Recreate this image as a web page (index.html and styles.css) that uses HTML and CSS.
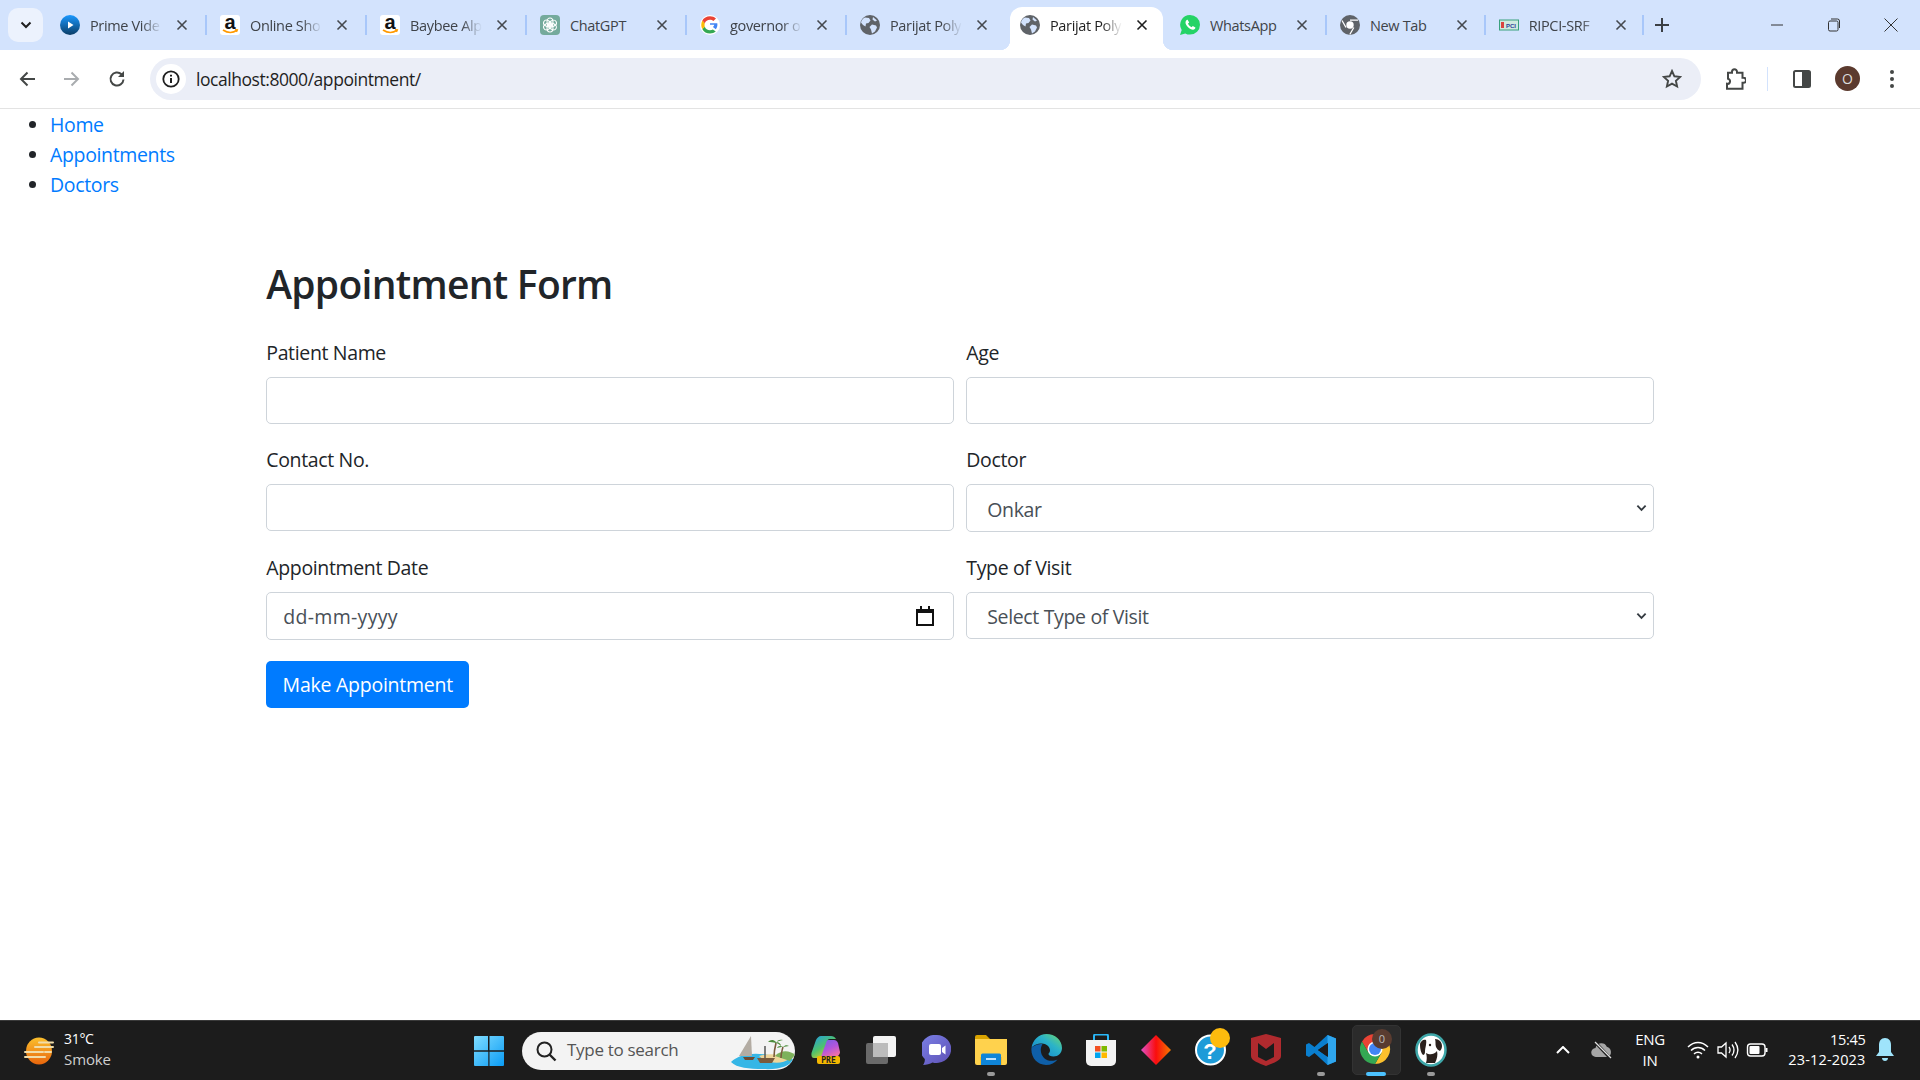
FILE: index.html
```html
<!DOCTYPE html>
<html lang="en">
<head>
<meta charset="utf-8">
<title>Appointment Form</title>
<link rel="stylesheet" href="styles.css">
</head>
<body>
<svg class="defs" width="0" height="0" aria-hidden="true">
  <defs>
    <symbol id="x" viewBox="0 0 12 12"><path d="M1.500 1.500l9 9M10.500 1.500l-9 9" fill="none" stroke="currentColor" stroke-width="1.600"/></symbol>
    <symbol id="globe" viewBox="0 0 20 20"><circle cx="10" cy="10" r="10" fill="#5f6368"/><path d="M5 2.500l4 .5 1.500 2.500-2 2.500-2.500 .5-.5 3-2.500-1.500-2-2.500C1.500 5 3 3.500 5 2.500zM12 9.500l4 1 1 2-2 4-3 2-1-4-1.500-2.500zM13 2l4 3.500-2 1-2.500-2z" fill="#d3e3fd"/></symbol>
    <symbol id="amazon" viewBox="0 0 20 20"><rect width="20" height="20" rx="3" fill="#fff"/><path d="M3 15c4.500 3 10 3 14 .3" fill="none" stroke="#f90" stroke-width="1.700"/><path d="M15 14.500l2.500 .2-1 2.300" fill="none" stroke="#f90" stroke-width="1.200"/><text x="10" y="13.500" text-anchor="middle" class="amz">a</text></symbol>
    <symbol id="chevron" viewBox="0 0 12 8"><path d="M1.500 1.500L6 6l4.500-4.500" fill="none" stroke="#343a40" stroke-width="2"/></symbol>
  </defs>
</svg>
<div class="window">
  <header class="tabstrip">
    <button class="tabsearch" aria-label="Search tabs"><svg width="12" height="8" viewBox="0 0 12 8"><path d="M1.500 1.500L6 6l4.500-4.500" fill="none" stroke="#1f1f1f" stroke-width="2"/></svg></button>
    <div class="tabs">
      <div class="tab"><svg class="fav" viewBox="0 0 20 20"><defs><linearGradient id="pv" x1="0" y1="0" x2="0" y2="1"><stop offset="0" stop-color="#1a98ff"/><stop offset="1" stop-color="#0b3d66"/></linearGradient></defs><circle cx="10" cy="10" r="10" fill="url(#pv)"/><path d="M8 6.500l5.500 3.500L8 13.500z" fill="#fff"/></svg><span class="tab-title">Prime Vide</span><svg class="close"><use href="#x"/></svg></div>
      <div class="tab"><svg class="fav"><use href="#amazon"/></svg><span class="tab-title">Online Sho</span><svg class="close"><use href="#x"/></svg></div>
      <div class="tab"><svg class="fav"><use href="#amazon"/></svg><span class="tab-title">Baybee Alp</span><svg class="close"><use href="#x"/></svg></div>
      <div class="tab"><svg class="fav" viewBox="0 0 20 20"><rect width="20" height="20" rx="4" fill="#74aa9c"/><g fill="none" stroke="#fff" stroke-width="1.100"><ellipse cx="10" cy="7" rx="3" ry="4"/><ellipse cx="10" cy="13" rx="3" ry="4"/><ellipse cx="10" cy="7" rx="3" ry="4" transform="rotate(60 10 10)"/><ellipse cx="10" cy="13" rx="3" ry="4" transform="rotate(60 10 10)"/><ellipse cx="10" cy="7" rx="3" ry="4" transform="rotate(120 10 10)"/><ellipse cx="10" cy="13" rx="3" ry="4" transform="rotate(120 10 10)"/></g></svg><span class="tab-title plain">ChatGPT</span><svg class="close"><use href="#x"/></svg></div>
      <div class="tab"><svg class="fav" viewBox="0 0 20 20"><circle cx="10" cy="10" r="10" fill="#fff"/><path d="M10 8.200h7.300c.4 2.200-.2 4.500-1.500 6L12.900 12c.8-.6 1.200-1.300 1.400-2.200H10z" fill="#4285f4"/><path d="M4.800 11.800c.7 2 2.700 3.400 5.200 3.400 1.100 0 2.100-.3 2.900-.8l2.900 2.200c-1.500 1.300-3.500 2-5.800 2-3.400 0-6.300-1.900-7.700-4.700z" fill="#34a853"/><path d="M4.800 11.800c-.4-1.100-.4-2.400 0-3.600L2.300 5.500C.9 8.300.9 11.600 2.300 14z" fill="#fbbc05"/><path d="M10 4.800c1.300 0 2.500.5 3.400 1.300l2.600-2.500C14.400 2 12.300 1.200 10 1.200c-3.400 0-6.300 1.800-7.700 4.300l2.500 2.700C5.500 6.200 7.500 4.800 10 4.800z" fill="#ea4335"/></svg><span class="tab-title">governor o</span><svg class="close"><use href="#x"/></svg></div>
      <div class="tab before-active"><svg class="fav"><use href="#globe"/></svg><span class="tab-title">Parijat Poly</span><svg class="close"><use href="#x"/></svg></div>
      <div class="tab active"><svg class="fav"><use href="#globe"/></svg><span class="tab-title">Parijat Poly</span><svg class="close"><use href="#x"/></svg></div>
      <div class="tab"><svg class="fav" viewBox="0 0 20 20"><path d="M10 0a10 9.800 0 0 1 0 19.600c-1.700 0-3.300-.4-4.700-1.200L0 20l1.700-5A9.800 9.800 0 0 1 10 0z" fill="#25d366"/><path d="M7 4.800c-1.700 1-2 3-.7 5.300 1.500 2.700 4.400 4.900 6.800 4.700 1.300-.2 2.200-1 2.300-2.300l-2.600-1.500-1.200 1.200c-1.500-.5-3-2-3.600-3.600l1.200-1.200L7.600 4.700z" fill="#fff"/></svg><span class="tab-title plain">WhatsApp</span><svg class="close"><use href="#x"/></svg></div>
      <div class="tab narrow"><svg class="fav" viewBox="0 0 20 20"><circle cx="10" cy="10" r="10" fill="#5f6368"/><circle cx="10" cy="10" r="3.700" fill="#fff"/><path d="M10 5.200h8M6 12.500l-4-7M13.800 12.500l-4 7" stroke="#fff" stroke-width="1.300" fill="none"/></svg><span class="tab-title plain">New Tab</span><svg class="close"><use href="#x"/></svg></div>
      <div class="tab narrow"><svg class="fav" viewBox="0 0 20 20"><rect x=".5" y="5" width="19" height="10" fill="#cfe9df" stroke="#3aa17e"/><rect x="2" y="7" width="3" height="6" fill="#d9433f"/><text x="12" y="12.500" text-anchor="middle" class="ripci">PCI</text></svg><span class="tab-title">RIPCI-SRF</span><svg class="close"><use href="#x"/></svg></div>
    </div>
    <button class="newtab" aria-label="New tab"><svg width="14" height="14" viewBox="0 0 14 14"><path d="M7 0v14M0 7h14" stroke="#3b3f45" stroke-width="2"/></svg></button>
    <div class="winctl">
      <svg class="wc" width="14" height="14" viewBox="0 0 14 14"><path d="M1 7h12" stroke="#333" stroke-width="1"/></svg>
      <svg class="wc" width="14" height="14" viewBox="0 0 14 14"><rect x="1.500" y="3" width="9.500" height="10" rx="1.500" fill="none" stroke="#333"/><path d="M4 1h6.500A2 2 0 0 1 12.500 3v7" fill="none" stroke="#333"/></svg>
      <svg class="wc" width="14" height="14" viewBox="0 0 14 14"><path d="M.5.500l13 13M13.500.500l-13 13" stroke="#333" stroke-width="1"/></svg>
    </div>
  </header>

  <nav class="toolbar">
    <svg class="tb back" width="18" height="18" viewBox="0 0 18 18"><path d="M17 9H3M9.500 2.500L3 9l6.500 6.500" fill="none" stroke="#444746" stroke-width="2"/></svg>
    <svg class="tb fwd" width="18" height="18" viewBox="0 0 18 18"><path d="M1 9h14M8.500 2.500L15 9l-6.500 6.500" fill="none" stroke="#a9acaf" stroke-width="2"/></svg>
    <svg class="tb reload" width="18" height="18" viewBox="0 0 18 18"><path d="M15.500 9.500a6.500 6.500 0 1 1-2-5.200" fill="none" stroke="#444746" stroke-width="2"/><path d="M16 1v6h-6z" fill="#444746"/></svg>
    <div class="omnibox">
      <span class="site-info"><svg width="18" height="18" viewBox="0 0 18 18"><circle cx="9" cy="9" r="7.700" fill="none" stroke="#1f1f1f" stroke-width="1.800"/><path d="M9 8v5M9 4.800v1.800" stroke="#1f1f1f" stroke-width="2"/></svg></span>
      <span class="url">localhost:8000/appointment/</span>
      <svg class="star" width="20" height="20" viewBox="0 0 20 20"><path d="M10 2l2.400 5.300 5.800.6-4.300 3.900 1.200 5.700-5.100-2.900-5.100 2.900 1.200-5.700L1.800 7.900l5.800-.6z" fill="none" stroke="#444746" stroke-width="1.900"/></svg>
    </div>
    <svg class="tb ext" width="22" height="22" viewBox="0 0 22 22"><path d="M8 4.500V3.500a2.500 2.500 0 0 1 5 0v1h5.500v5h1a2.500 2.500 0 0 1 0 5h-1v6H3v-5a2.500 2.500 0 0 0 1-5h0v-6z" transform="translate(0 .3)" fill="none" stroke="#444746" stroke-width="2"/></svg>
    <span class="tb-sep"></span>
    <svg class="tb panel" width="20" height="20" viewBox="0 0 20 20"><rect x="2" y="2" width="16" height="16" rx="1.500" fill="none" stroke="#444746" stroke-width="2"/><rect x="10" y="2" width="8" height="16" fill="#444746"/></svg>
    <span class="avatar">O</span>
    <svg class="tb menu" width="6" height="20" viewBox="0 0 6 20"><circle cx="3" cy="3" r="2" fill="#444746"/><circle cx="3" cy="10" r="2" fill="#444746"/><circle cx="3" cy="17" r="2" fill="#444746"/></svg>
  </nav>

  <main class="page">
    <ul class="site-nav">
      <li><a href="#">Home</a></li>
      <li><a href="#">Appointments</a></li>
      <li><a href="#">Doctors</a></li>
    </ul>
    <section class="container">
      <h2>Appointment Form</h2>
      <form class="form-grid">
        <div class="field"><label for="pn">Patient Name</label><input id="pn" class="control" type="text"></div>
        <div class="field"><label for="age">Age</label><input id="age" class="control" type="text"></div>
        <div class="field"><label for="cn">Contact No.</label><input id="cn" class="control" type="text"></div>
        <div class="field"><label for="doc">Doctor</label>
          <div class="ctl-wrap"><select id="doc" class="control select"><option>Onkar</option></select><svg class="caret"><use href="#chevron"/></svg></div></div>
        <div class="field"><label for="dt">Appointment Date</label>
          <div class="ctl-wrap"><input id="dt" class="control date" type="text" placeholder="dd-mm-yyyy">
            <svg class="cal" width="18" height="20" viewBox="0 0 18 20"><path d="M1 4h16v15H1z" fill="none" stroke="#111" stroke-width="2"/><path d="M0 3h18v4H0zM4 0h2v4H4zM12 0h2v4h-2z" fill="#111"/></svg></div></div>
        <div class="field"><label for="tv">Type of Visit</label>
          <div class="ctl-wrap"><select id="tv" class="control select short"><option>Select Type of Visit</option></select><svg class="caret"><use href="#chevron"/></svg></div></div>
        <div class="actions"><button type="button" class="btn">Make Appointment</button></div>
      </form>
    </section>
  </main>

  <footer class="taskbar">
    <div class="weather">
      <svg width="34" height="28" viewBox="0 0 34 28"><defs><linearGradient id="sun" x1="0" y1="0" x2="0" y2="1"><stop offset="0" stop-color="#fbc02d"/><stop offset="1" stop-color="#e8650c"/></linearGradient></defs><ellipse cx="16" cy="14" rx="13" ry="13.500" fill="url(#sun)"/><path d="M16 5.500h14M12 10h18M2 15h18M22 15h6M2 20h20" stroke="#f1dca8" stroke-width="2" stroke-linecap="round"/></svg>
      <div class="wtext"><span class="temp">31°C</span><span class="cond">Smoke</span></div>
    </div>
    <svg class="startbtn" width="30" height="30" viewBox="0 0 30 30"><defs><linearGradient id="win" x1="0" y1="0" x2="1" y2="1"><stop offset="0" stop-color="#7fdcff"/><stop offset="1" stop-color="#0a9cf5"/></linearGradient></defs><path d="M0 1a1 1 0 0 1 1-1h13v14.300H0zM15.500 0H29a1 1 0 0 1 1 1v13.300H15.500zM0 15.700h14.300V30H1a1 1 0 0 1-1-1zM15.500 15.700H30V29a1 1 0 0 1-1 1H15.500z" fill="url(#win)"/></svg>
    <div class="search">
      <svg width="22" height="22" viewBox="0 0 22 22"><circle cx="9.500" cy="9.500" r="7" fill="none" stroke="#222" stroke-width="2"/><path d="M14.500 14.500l6 6" stroke="#222" stroke-width="2.400"/></svg>
      <span class="search-text">Type to search</span>
      <svg class="island" width="66" height="38" viewBox="0 0 66 38"><path d="M2 30c8-8 22-10 38-7 10 1 18 2 24 4-2 7-14 11-30 10C20 37 8 36 2 30z" fill="#35b6e6"/><path d="M30 24c10-3 22-2 30 3-6 5-20 6-30-3z" fill="#eed59a"/><path d="M46 24c6-6 14-6 20-1l-5 6z" fill="#7db15b"/><path d="M22 4L10 24h13z" fill="#b3aca3"/><path d="M14 25h12l-2 3h-8z" fill="#6c4a32"/><path d="M28 26h18l-3 5H31z" fill="#7a5a3c"/><path d="M36 14v12" stroke="#555" stroke-width="1.500"/><path d="M45 25c0-6 1-10 2-14" stroke="#7a5a3c" stroke-width="1.600" fill="none"/><path d="M47 10c-3-3-6-2-8 0 3 0 5 0 8 1 1-3 4-4 7-3-3 1-5 1-7 2 3 0 5 2 5 4-2-2-4-3-5-3z" fill="#4c8b3a"/><path d="M52 26c0-5 1-7 2-11" stroke="#7a5a3c" stroke-width="1.500" fill="none"/><path d="M54 15c-3-2-5-1-6 1 3-1 4-1 6-1 2-2 4-2 6-1-2 0-4 1-6 1z" fill="#4c8b3a"/></svg>
    </div>
    <div class="apps">
      <span class="app"><svg width="30" height="28" viewBox="0 0 30 28"><defs><linearGradient id="cp1" x1="0" y1="0" x2=".7" y2="1"><stop offset="0" stop-color="#1f9be8"/><stop offset=".55" stop-color="#4fc36b"/><stop offset="1" stop-color="#f5d020"/></linearGradient><linearGradient id="cp2" x1="0" y1="0" x2=".6" y2="1"><stop offset="0" stop-color="#6a63e6"/><stop offset=".6" stop-color="#b455dc"/><stop offset="1" stop-color="#ee6fa8"/></linearGradient></defs><path d="M13 7c1-2 2-3 4-3h6c2 0 3 1 4 3l2 9c0 3-3 5-6 5H8z" fill="url(#cp2)"/><path d="M10 0h10c2 0 4 1 5 3h-6c-2 0-3 1-4 4l-4 11c-1 3-2 4-4 4H3c-2 0-3-2-2.500-5L5 4c1-2 3-4 5-4z" fill="url(#cp1)"/><rect x="6" y="20" width="23" height="8" rx="2" fill="#f5b800"/><text x="17.500" y="27" text-anchor="middle" class="pre">PRE</text></svg></span>
      <span class="app"><svg width="30" height="28" viewBox="0 0 30 28"><rect y="7" width="22" height="21" rx="2" fill="#6a6a6a"/><rect x="7" width="23" height="21" rx="2" fill="#f4f4f4"/><rect x="7" y="7" width="15" height="14" fill="#bcbcbc"/></svg></span>
      <span class="app"><svg width="29" height="30" viewBox="0 0 29 30"><defs><linearGradient id="chat" x1="0" y1="0" x2="1" y2="1"><stop offset="0" stop-color="#7a80e6"/><stop offset="1" stop-color="#5e50b4"/></linearGradient></defs><path d="M14.500 0a14.500 14 0 1 1-4 27.400C8 28.800 4.500 29.800 1 30c1.300-1.500 2-4 1.800-6A14.500 14 0 0 1 14.500 0z" fill="url(#chat)"/><rect x="7" y="9" width="12" height="11" rx="2" fill="#fff"/><path d="M20 13l3.500-2.500v9L20 17z" fill="#fff"/></svg></span>
      <span class="app running"><svg width="32" height="30" viewBox="0 0 32 30"><path d="M0 2a2 2 0 0 1 2-2h9l4 4h-15z" fill="#d9a300"/><path d="M0 4h32v24a2 2 0 0 1-2 2H2a2 2 0 0 1-2-2z" fill="#ffd24d"/><rect x="5" y="22" width="22" height="8" fill="#fbc02d"/><path d="M6 20a1.500 1.500 0 0 1 1.500-1.500h17A1.500 1.500 0 0 1 26 20v10H6z" fill="#0f85d8"/><rect x="11" y="23" width="10" height="2" fill="#bfe3ff"/></svg></span>
      <span class="app"><svg width="31" height="31" viewBox="0 0 31 31"><defs><linearGradient id="edg" x1="0" y1="1" x2="1" y2="0"><stop offset="0" stop-color="#0f7ccf"/><stop offset=".6" stop-color="#2bb3c8"/><stop offset="1" stop-color="#6fd86a"/></linearGradient></defs><path d="M.5 14C1.500 6 8 0 15.500 0 24 0 31 6 31 14c0 5-4 8.500-8.500 8.500-3 0-5-1-5-2.500 0-1 1.500-1.500 1.500-3.500 0-4-4-7-8-7-5 0-9 2-10.500 4.500z" fill="url(#edg)"/><path d="M.5 14C-.5 23 6 31 15 31c5 0 9-2 11.500-5.500-4 2-10 2-13.500-1.500C9 20 9 14 11.500 10 7 10 2.500 11.500.5 14z" fill="#0f5fa8"/></svg></span>
      <span class="app"><svg width="30" height="32" viewBox="0 0 30 32"><path d="M8 6V2a1.500 1.500 0 0 1 1.500-1.500h11A1.500 1.500 0 0 1 22 2v4" fill="none" stroke="#29b6f6" stroke-width="2"/><path d="M0 6h30v21a5 5 0 0 1-5 5H5a5 5 0 0 1-5-5z" fill="#f3f3f3"/><rect x="9" y="12" width="5.500" height="5.500" fill="#f25022"/><rect x="15.500" y="12" width="5.500" height="5.500" fill="#7fba00"/><rect x="9" y="18.500" width="5.500" height="5.500" fill="#00a4ef"/><rect x="15.500" y="18.500" width="5.500" height="5.500" fill="#ffb900"/></svg></span>
      <span class="app"><svg width="30" height="30" viewBox="0 0 30 30"><defs><linearGradient id="dia" x1="0" y1="0" x2="1" y2="0"><stop offset="0" stop-color="#e050c8"/><stop offset=".5" stop-color="#fa0d0d"/><stop offset="1" stop-color="#f57a00"/></linearGradient></defs><path d="M15 0l15 15-15 15L0 15z" fill="url(#dia)"/></svg></span>
      <span class="app help"><svg width="36" height="38" viewBox="0 0 36 38"><circle cx="15.500" cy="22" r="14.500" fill="#1d9bd8" stroke="#fff" stroke-width="2"/><text x="15" y="31" text-anchor="middle" class="qm">?</text><ellipse cx="25" cy="10" rx="10" ry="10" fill="#fdbb0d"/></svg></span>
      <span class="app"><svg width="30" height="32" viewBox="0 0 30 32"><path d="M0 4l15-4 15 4v18c0 5-8 7-15 10C8 29 0 27 0 22z" fill="#b02a2e"/><path d="M7 9l8 6 8-6v14l-8 4-8-4z" fill="#1c1c1c"/></svg></span>
      <span class="app running"><svg width="30" height="30" viewBox="0 0 30 30"><path d="M21.500 0L8.500 12 3 8 0 9.500v11L3 22l5.500-4 13 12 8.500-3.500V3.500zM22 8v14L12 15z" fill="#0a7fcf"/><path d="M21.500 0L30 3.500v23L21.500 30z" fill="#2fa6ee"/><path d="M22 8L12 15l10 7z" fill="#1c1c1c"/></svg></span>
      <span class="app current"><svg width="32" height="36" viewBox="0 0 32 36"><g transform="translate(0 5)"><path d="M28 7.500A15 15 0 0 0 2 7.500L8.500 18.750 15 7.500z" fill="#ea4335"/><path d="M28 7.500A15 15 0 0 1 15 30l6.500-11.250L15 7.500z" fill="#fbc02d"/><path d="M15 30A15 15 0 0 1 2 7.500l6.500 11.250h13z" fill="#34a853"/><circle cx="15" cy="15" r="7.500" fill="#fff"/><circle cx="15" cy="15" r="6" fill="#4285f4"/></g><circle cx="22" cy="10" r="10" fill="#5a3c30"/><text x="22" y="14" text-anchor="middle" class="zero">0</text></svg></span>
      <span class="app running"><svg width="32" height="34" viewBox="0 0 32 34"><ellipse cx="16" cy="17" rx="14.500" ry="15.500" fill="#fff" stroke="#3ea6a8" stroke-width="2.500"/><path d="M5 12c0-4 4-6 6-5 1 3-1 8-1 12 0 2-1 3-2 3-2-2-3-6-3-10z" fill="#2a201c"/><path d="M20 6c4 0 7 3 7 7 0 2-1 4-2 5-2-1-3-2-4-4-1-3 0-5-1-8z" fill="#2a201c"/><path d="M11 20c3 2 8 2 11-2 1 4 0 8-2 12H11c1-3 1-7 0-10z" fill="#2a201c"/><circle cx="15" cy="12" r="1.200" fill="#2a201c"/></svg></span>
    </div>
    <div class="tray">
      <svg class="t-chev" width="14" height="8" viewBox="0 0 14 8"><path d="M1 7l6-6 6 6" fill="none" stroke="#fff" stroke-width="2"/></svg>
      <svg class="t-cloud" width="22" height="18" viewBox="0 0 22 18"><path d="M5 16a4.500 4.500 0 0 1-.5-9 6 6 0 0 1 11.300-1.200A5.500 5.500 0 0 1 17 16z" fill="#a6a6a6"/><path d="M4 1l15 16" stroke="#1c1c1c" stroke-width="3"/><path d="M4 1l16 16" stroke="#e0e0e0" stroke-width="1.300"/></svg>
      <div class="lang"><span>ENG</span><span>IN</span></div>
      <svg class="t-wifi" width="22" height="18" viewBox="0 0 22 18"><path d="M1 6c6-6 14-6 20 0M4 9.500c4-4 10-4 14 0M7 12.800c2.500-2 5.500-2 8 0" fill="none" stroke="#fff" stroke-width="1.500"/><circle cx="11" cy="16" r="1.500" fill="#fff"/></svg>
      <svg class="t-vol" width="22" height="18" viewBox="0 0 22 18"><path d="M1 6h3.500L9 2v14l-4.500-4H1z" fill="none" stroke="#fff" stroke-width="1.300"/><path d="M12 6c1.300 1.800 1.300 4.200 0 6M15 3.500c2.400 3.300 2.400 7.700 0 11M18 1c3.600 5 3.600 11 0 16" fill="none" stroke="#fff" stroke-width="1.300"/></svg>
      <svg class="t-bat" width="22" height="14" viewBox="0 0 22 14"><rect x="1" y="1" width="17.500" height="12" rx="3" fill="none" stroke="#fff" stroke-width="1.400"/><rect x="3" y="3" width="10" height="8" rx="1" fill="#fff"/><path d="M20 5v4" stroke="#fff" stroke-width="2"/></svg>
      <div class="clock"><span>15:45</span><span class="date-text">23-12-2023</span></div>
      <svg class="t-bell" width="18" height="24" viewBox="0 0 18 24"><path d="M9 0c4 0 6 3 6 7v7l3 4H0l3-4V7c0-4 2-7 6-7z" fill="#9fe4fb"/><path d="M6 20h6c0 2-1.500 3-3 3s-3-1-3-3z" fill="#9fe4fb"/></svg>
    </div>
  </footer>
</div>
</body>
</html>
```
FILE: styles.css
```css
* { box-sizing: border-box; }
html, body { margin: 0; height: 100%; }
body { font-family: "Open Sans", "Noto Sans", sans-serif; color: #212529; background: #fff; overflow: hidden; }
.defs { position: absolute; }
.amz { font: 700 20px "Liberation Sans", sans-serif; fill: #111; }
.ripci { font: 700 6px "Liberation Sans", sans-serif; fill: #2a3f9c; }
.pre { font: 700 8px "DejaVu Sans Mono", monospace; fill: #222; }
.qm { font: 700 22px "Liberation Sans", sans-serif; fill: #fff; }
.zero { font: 400 11px "Open Sans", sans-serif; fill: #bdbdbd; }

.window { display: flex; flex-direction: column; height: 1080px; }

/* Tab strip */
.tabstrip { display: flex; align-items: flex-start; height: 50px; background: #d3e3fd; flex: none; }
.tabsearch { width: 35px; height: 34px; margin: 8px 3px 0 8px; border: 0; border-radius: 10px; background: #ecf2fd; display: flex; align-items: center; justify-content: center; padding: 0; }
.tabs { display: flex; height: 50px; }
.tab { position: relative; width: 160px; height: 43px; margin-top: 7px; display: flex; align-items: center; padding: 0 0 7px 14px; color: #3f4349; }
.tab.narrow { width: 158.700px; }
.tab::after { content: ""; position: absolute; right: -1px; top: 8px; width: 2px; height: 20px; background: #a8c7fa; }
.tab.active::after, .tab.before-active::after { display: none; }
.fav { width: 20px; height: 20px; flex: none; }
.tab-title { width: 72px; margin-left: 10px; font-size: 14.500px; letter-spacing: -.35px; white-space: nowrap; flex: none; -webkit-mask-image: linear-gradient(90deg, #000 72%, transparent 100%); mask-image: linear-gradient(90deg, #000 72%, transparent 100%); }
.tab-title.plain { -webkit-mask-image: none; mask-image: none; }
.close { width: 12px; height: 12px; margin-left: 14px; flex: none; color: #45494f; }
.tab.active { background: #fff; border-radius: 12px 12px 0 0; width: 153px; margin: 7px 3.500px 0; padding-left: 10.500px; color: #1f1f1f; }
.tab.active .close { color: #1f1f1f; }
.tab.active::before { content: ""; position: absolute; left: -10px; bottom: 0; width: 10px; height: 10px; background: radial-gradient(circle at 0 0, transparent 10px, #fff 10.500px); }
.tab.active::after { content: ""; display: block; position: absolute; right: -10px; top: auto; bottom: 0; width: 10px; height: 10px; background: radial-gradient(circle at 100% 0, transparent 10px, #fff 10.500px); }
.newtab { width: 14px; height: 14px; padding: 0; border: 0; background: none; margin: 18px 0 0 12px; display: flex; }
.winctl { margin-left: auto; display: flex; align-items: center; height: 49px; padding-right: 22px; gap: 43px; }
.wc { flex: none; }

/* Toolbar */
.toolbar { display: flex; align-items: center; height: 59px; padding: 0 0 1px 18px; background: #fff; border-bottom: 1px solid #e3e3e3; flex: none; border-radius: 12px 12px 0 0; }
.tb { flex: none; }
.fwd { margin-left: 27px; }
.reload { margin-left: 27px; }
.omnibox { display: flex; align-items: center; width: 1551px; height: 42px; margin-left: 24px; padding: 0 19px 0 6px; border-radius: 21px; background: #ebeef7; flex: none; }
.site-info { width: 30px; height: 30px; border-radius: 50%; background: #fff; display: flex; align-items: center; justify-content: center; flex: none; }
.url { margin-left: 10px; font-size: 17.500px; letter-spacing: -.45px; color: #1f1f1f; white-space: nowrap; }
.star { margin-left: auto; }
.ext { margin-left: 23px; }
.tb-sep { width: 1px; height: 24px; margin-left: 21px; background: #d3e3fd; flex: none; }
.panel { margin-left: 24px; }
.avatar { width: 25px; height: 25px; margin-left: 23px; border-radius: 50%; background: #5b3a2e; color: #ddd; font-size: 14px; display: flex; align-items: center; justify-content: center; flex: none; }
.menu { margin-left: 29px; }

/* Page */
.page { flex: 1; min-height: 0; font-size: 19.500px; letter-spacing: -.35px; line-height: 30px; }
.site-nav { margin: 0; padding: 1px 0 0 50px; }
.site-nav a { color: #007bff; text-decoration: none; }
.container { width: 1387.500px; margin: 0 auto; padding-top: 60px; }
h2 { margin: 0 0 29px; font-size: 39px; font-weight: 600; line-height: 48px; letter-spacing: -.72px; }
.form-grid { display: grid; grid-template-columns: 1fr 1fr; column-gap: 12.500px; row-gap: 20px; }
.field { min-width: 0; }
label { display: block; padding-top: 1px; margin-bottom: 9px; line-height: 30px; }
.control { display: block; width: 100%; height: 47px; padding: 7.500px 15px; border: 1px solid #ced4da; border-radius: 5px; background: #fff; color: #495057; font: inherit; letter-spacing: inherit; }
.select { height: 48px; padding: 9px 20px 6px; appearance: none; -webkit-appearance: none; }
.select.short { height: 47px; }
.ctl-wrap { position: relative; }
.caret { position: absolute; right: 7px; top: 20px; width: 11px; height: 8px; }
.date { height: 48px; padding-left: 16px; letter-spacing: .3px; }
.date::placeholder { color: #495057; opacity: 1; }
.cal { position: absolute; right: 20px; top: 14px; }
.actions { grid-column: 1 / -1; padding-top: 1px; }
.btn { height: 47px; width: 203px; padding: 0; border: 0; border-radius: 5px; background: #007bff; color: #fff; font: inherit; letter-spacing: -.25px; }

/* Taskbar */
.taskbar { display: flex; align-items: center; height: 60px; flex: none; background: #1c1c1c; border-top: 1px solid #3a3a3a; color: #fff; }
.weather { width: 472px; padding-left: 23px; display: flex; align-items: center; gap: 7px; flex: none; }
.wtext { display: flex; flex-direction: column; font-size: 14px; line-height: 20px; letter-spacing: -.3px; margin-top: -3px; }
.cond { color: #cfcfcf; font-size: 15px; letter-spacing: -.1px; }
.startbtn { flex: none; margin-right: 18px; margin-left: 2px; }
.search { width: 273px; height: 38px; border-radius: 19px; background: #f3f3f3; display: flex; align-items: center; padding: 0 0 0 13px; flex: none; overflow: hidden; }
.search-text { margin: -2px 0 0 10px; font-size: 17px; letter-spacing: -.3px; color: #555; white-space: nowrap; }
.island { margin-left: auto; flex: none; }
.apps { display: flex; margin-left: 3.500px; height: 59px; flex: none; }
.app { position: relative; width: 55px; height: 59px; padding-bottom: 2px; display: flex; align-items: center; justify-content: center; flex: none; }
.app.running::after, .app.current::after { content: ""; position: absolute; left: 50%; bottom: 4px; width: 8px; height: 4px; margin-left: -4px; border-radius: 2px; background: #9a9a9a; }
.app.current::before { content: ""; position: absolute; left: 3px; right: 3px; top: 4px; bottom: 5px; border-radius: 5px; background: #2b2b2b; border: 1px solid #333; }
.app.current svg { position: relative; margin-top: -6px; }
.app.current::after { width: 20px; margin-left: -10px; background: #4cc2ff; }
.help svg { margin: -6px 0 0 3px; }
.tray { margin-left: auto; display: flex; align-items: center; height: 59px; padding-right: 24px; width: 462px; padding-left: 89px; padding-bottom: 2px; flex: none; }
.t-chev { width: 30px; padding: 0 8px; flex: none; }
.t-cloud { width: 48px; flex: none; }
.lang { width: 49px; display: flex; flex-direction: column; align-items: center; font-size: 15px; line-height: 21px; letter-spacing: -.3px; flex: none; }
.t-wifi { margin-left: 10px; width: 26px; flex: none; }
.t-vol { width: 34px; flex: none; }
.t-bat { width: 25px; flex: none; }
.clock { width: 96px; display: flex; flex-direction: column; align-items: flex-end; font-size: 14.500px; line-height: 20px; letter-spacing: -.3px; flex: none; white-space: nowrap; }
.date-text { letter-spacing: .15px; }
.t-bell { width: 38px; flex: none; }
```
